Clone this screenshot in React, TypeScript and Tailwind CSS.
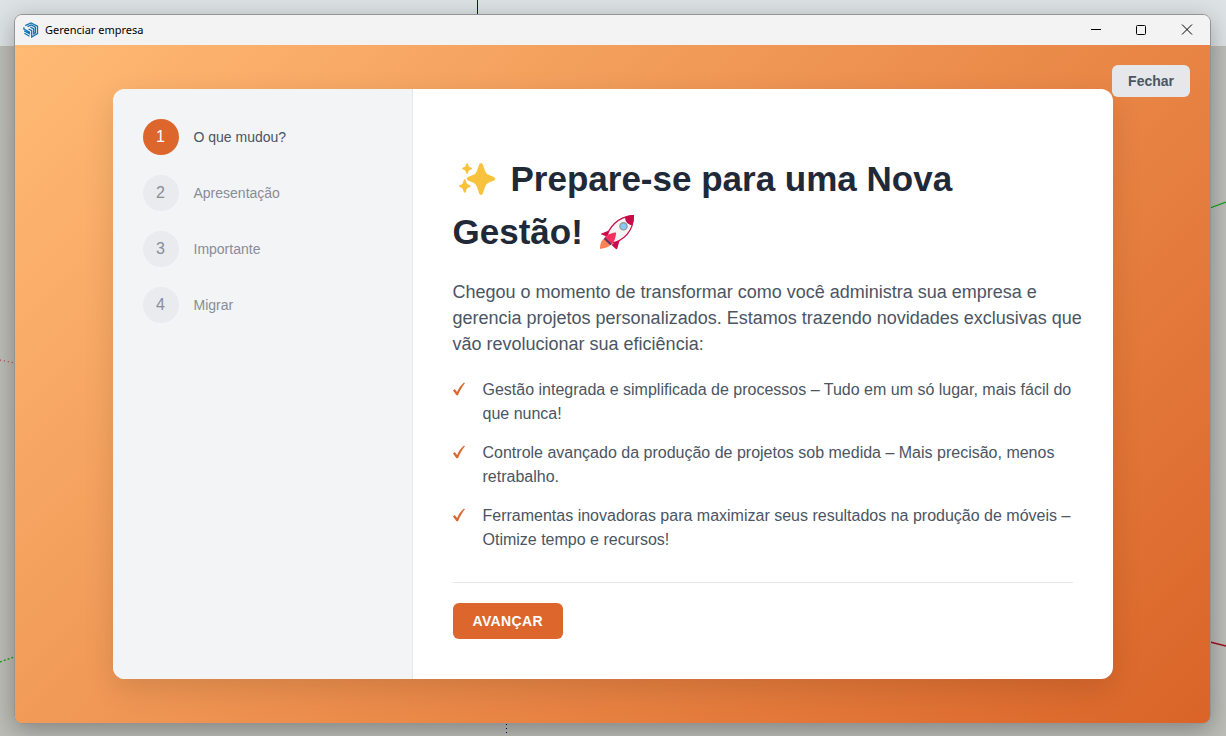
import { clsx } from "clsx"

const steps = ["O que mudou?", "Apresentação", "Importante", "Migrar"]

const features = [
  "Gestão integrada e simplificada de processos – Tudo em um só lugar, mais fácil do que nunca!",
  "Controle avançado da produção de projetos sob medida – Mais precisão, menos retrabalho.",
  "Ferramentas inovadoras para maximizar seus resultados na produção de móveis – Otimize tempo e recursos!",
]

function AppLogo() {
  return (
    <svg viewBox="0 0 16 16" className="h-4 w-4" fill="none" stroke="#1673b1" strokeWidth="1.3" aria-hidden="true">
      <path d="M2.2 3.6 8 .9l6.500 3.200v7.500L8.700 15V8.600L5.600 7" />
      <path d="M4.500 4.700 8.300 3l4.100 2.200v5.600l-1.700.9V6.900L7.400 5.200" />
      <path d="M.9 5.200v1.900l5.600 3v1.600L1.200 9M1.400 11.300l5.100 2.900" />
    </svg>
  )
}

function Sparkles() {
  return (
    <svg viewBox="0 0 36 33" className="mr-4 ml-1.5 inline-block h-[33px] w-9 align-[-5px]" fill="#f9c23c" role="img" aria-label="Brilhos">
      <path d="M20.2 1.4c.6-1.7 3-1.7 3.6 0l2.4 6.8a6.5 6.5 0 0 0 3.8 3.8l5 2.1c1.600.700 1.600 2.800 0 3.500l-5 2a6.5 6.5 0 0 0-3.8 3.8l-2.4 7.2c-.6 1.7-3 1.7-3.6 0l-2.4-7.2a6.5 6.5 0 0 0-3.8-3.8l-5-2c-1.6-.7-1.6-2.8 0-3.5l5-2.1a6.5 6.5 0 0 0 3.8-3.8z" />
      <path d="M7.3.8c.3-.9 1.3-.9 1.6 0l.8 2.1c.2.6.7 1 1.2 1.2l1.6.6c.8.3.8 1.3 0 1.6l-1.6.6c-.6.2-1 .7-1.2 1.2l-.8 2.2c-.3.8-1.3.8-1.6 0l-.8-2.2a2 2 0 0 0-1.2-1.2l-1.6-.6c-.8-.3-.8-1.3 0-1.6l1.6-.6c.6-.2 1-.7 1.2-1.2z" />
      <path d="M4.8 17.1c.3-1 1.6-1 1.9 0l.9 2.8c.3.7.8 1.2 1.5 1.5l1.8.8c.9.4.9 1.5 0 1.9l-1.8.7c-.7.3-1.2.9-1.5 1.5l-.9 2.8c-.3 1-1.6 1-1.9 0l-.9-2.8c-.3-.6-.8-1.2-1.5-1.5l-1.8-.7c-.9-.4-.9-1.5 0-1.9l1.8-.8c.7-.3 1.2-.8 1.5-1.5z" />
    </svg>
  )
}

function Rocket() {
  return (
    <svg viewBox="0 0 36 36" className="ml-4 inline-block h-9 w-9 align-[-6px]" role="img" aria-label="Foguete">
      <path d="M6.500 24 12 29.500c-.8 3.500-6 4.700-11 5.400C.9 31 2 25.500 6.500 24z" fill="#ff8257" />
      <path d="M12.500 15.500 2.500 19.400c-.6.3-.6.9 0 1.100L9 23zM21.500 23.500l-3.200 11c-.3.700-.9.800-1.400.4L12.500 31z" fill="#ca0b4a" />
      <path d="M7.500 24.500C9 14 18.500 2.500 34.200 1.600 35 16.500 25 26.800 12 29.200z" fill="#f4f4f4" stroke="#ca0b4a" strokeWidth="1.300" />
      <path d="M26 2.900C29 1.700 32 1 35 1.100c.3 3.600-.5 7-1.900 10.100-4.500-.8-7-3.800-7.100-8.300z" fill="#ca0b4a" />
      <path d="M5.500 24.500c.8-2.800 3.400-4.300 10.500-5.900.7-.1 1.200.3 1.100.9-.9 6.500-2.600 9.900-5.600 11z" fill="#f92f60" />
      <path d="M6 23.500 12.800 30l-1.400 1.300L4.800 25z" fill="#533566" />
      <circle cx="24.500" cy="12.300" r="3.600" fill="#83cbff" stroke="#9b9b9b" strokeWidth="1.400" />
    </svg>
  )
}

function TitleBar() {
  return (
    <header className="flex h-[30px] items-center bg-[#f3f3f3] pl-2 text-black">
      <AppLogo />
      <span className="ml-1.5 flex-1 font-['Noto_Sans',sans-serif] text-[11px]">Gerenciar empresa</span>
      <button type="button" aria-label="Minimizar" className="flex h-full w-[46px] items-center justify-center">
        <svg viewBox="0 0 12 12" className="h-3 w-3" stroke="currentColor"><path d="M2 5.500h10" /></svg>
      </button>
      <button type="button" aria-label="Maximizar" className="flex h-full w-[46px] items-center justify-center">
        <svg viewBox="0 0 12 12" className="h-3 w-3" fill="none" stroke="currentColor">
          <rect x="1.500" y="1.500" width="9" height="9" rx="1" />
        </svg>
      </button>
      <button type="button" aria-label="Fechar janela" className="flex h-full w-[46px] items-center justify-center">
        <svg viewBox="0 0 12 12" className="h-3 w-3" stroke="currentColor">
          <path d="m1 .5 10 10M11 .5l-10 10" />
        </svg>
      </button>
    </header>
  )
}

// Axes of the 3D viewport behind the dialog
function Viewport() {
  return (
    <svg className="absolute inset-0 h-full w-full" aria-hidden="true">
      <path d="M477.500 0v14" stroke="#0a0aa8" />
      <path d="M506.500 724v12" stroke="#00006b" strokeDasharray="1 3" />
      <path d="M1210 208l16-6" stroke="#12a012" strokeWidth="1.300" />
      <path d="M1210 642l16 4" stroke="#a01020" strokeWidth="1.300" />
      <path d="M0 360l14 3" stroke="#c01818" strokeDasharray="1 3" />
      <path d="M0 662l14-5" stroke="#12a012" strokeWidth="1.300" strokeDasharray="2 2" />
    </svg>
  )
}

export default function App() {
  return (
    <div className="relative flex min-h-screen flex-col bg-[linear-gradient(#dde2e4_46px,#bcbdb7_46px)] px-3.5 pt-3.5 pb-3 font-['Liberation_Sans',Arial,sans-serif]">
      <Viewport />
      <div className="relative mr-px flex flex-1 flex-col overflow-hidden rounded-lg border border-[#949494] shadow-[0_6px_24px_rgba(0,0,0,0.3)]">
        <TitleBar />
        <main className="relative flex flex-1 items-center justify-center bg-linear-135/srgb from-[#ffba74] to-[#da6428]">
          <button
            type="button"
            className="absolute top-5 right-5 h-8 rounded-md bg-[#e5e7eb] px-4 text-sm font-bold text-[#4b5563]"
          >
            Fechar
          </button>

          <div className="flex w-full max-w-[1000px] overflow-hidden rounded-xl bg-white shadow-[0_10px_30px_rgba(0,0,0,0.12)]">
            <aside className="w-[300px] shrink-0 border-r border-[#e5e7eb] bg-[#f3f4f6] p-[30px]">
              <ol className="flex flex-col gap-5">
                {steps.map((label, i) => (
                  <li key={label} className="flex items-center gap-[15px]">
                    <span
                      className={clsx(
                        "flex h-9 w-9 items-center justify-center rounded-full text-base",
                        i === 0 ? "bg-[#dc662b] text-white" : "bg-[#e9ebee] text-[#888d97]"
                      )}
                    >
                      {i + 1}
                    </span>
                    <span className={clsx("text-sm", i === 0 ? "text-[#4b5563]" : "text-[#888d97]")}>{label}</span>
                  </li>
                ))}
              </ol>
            </aside>

            <section className="flex-1 px-10 pt-[63px] pb-10 text-[#4b5563]">
              <h1 className="mb-[21px] text-[35px] leading-[53px] font-bold text-[#1f2937]">
                <Sparkles />
                Prepare-se para uma Nova Gestão!
                <Rocket />
              </h1>
              <p className="-mr-4 mb-[21px] text-lg leading-[26px]">
                Chegou o momento de transformar como você administra sua empresa e gerencia projetos
                personalizados. Estamos trazendo novidades exclusivas que vão revolucionar sua eficiência:
              </p>
              <ul className="flex flex-col gap-[15px]">
                {features.map((text) => (
                  <li key={text} className="flex text-base">
                    <svg viewBox="0 0 12 14" className="mt-1 mr-[18px] h-3.5 w-3 shrink-0" aria-hidden="true">
                      <path d="M0 8.500 1.700 7l2.400 3C6 6 8.200 3 11 .6l.9.700C9.300 4.500 6.900 8.500 5 13.200H3.500z" fill="#dc662b" />
                    </svg>
                    {text}
                  </li>
                ))}
              </ul>
              <div className="mt-[30px] border-t border-[#e5e7eb] pt-5">
                <button
                  type="button"
                  className="block h-9 rounded-md bg-[#dc662b] px-5 text-sm font-bold tracking-wide text-white"
                >
                  AVANÇAR
                </button>
              </div>
            </section>
          </div>
        </main>
      </div>
    </div>
  )
}
